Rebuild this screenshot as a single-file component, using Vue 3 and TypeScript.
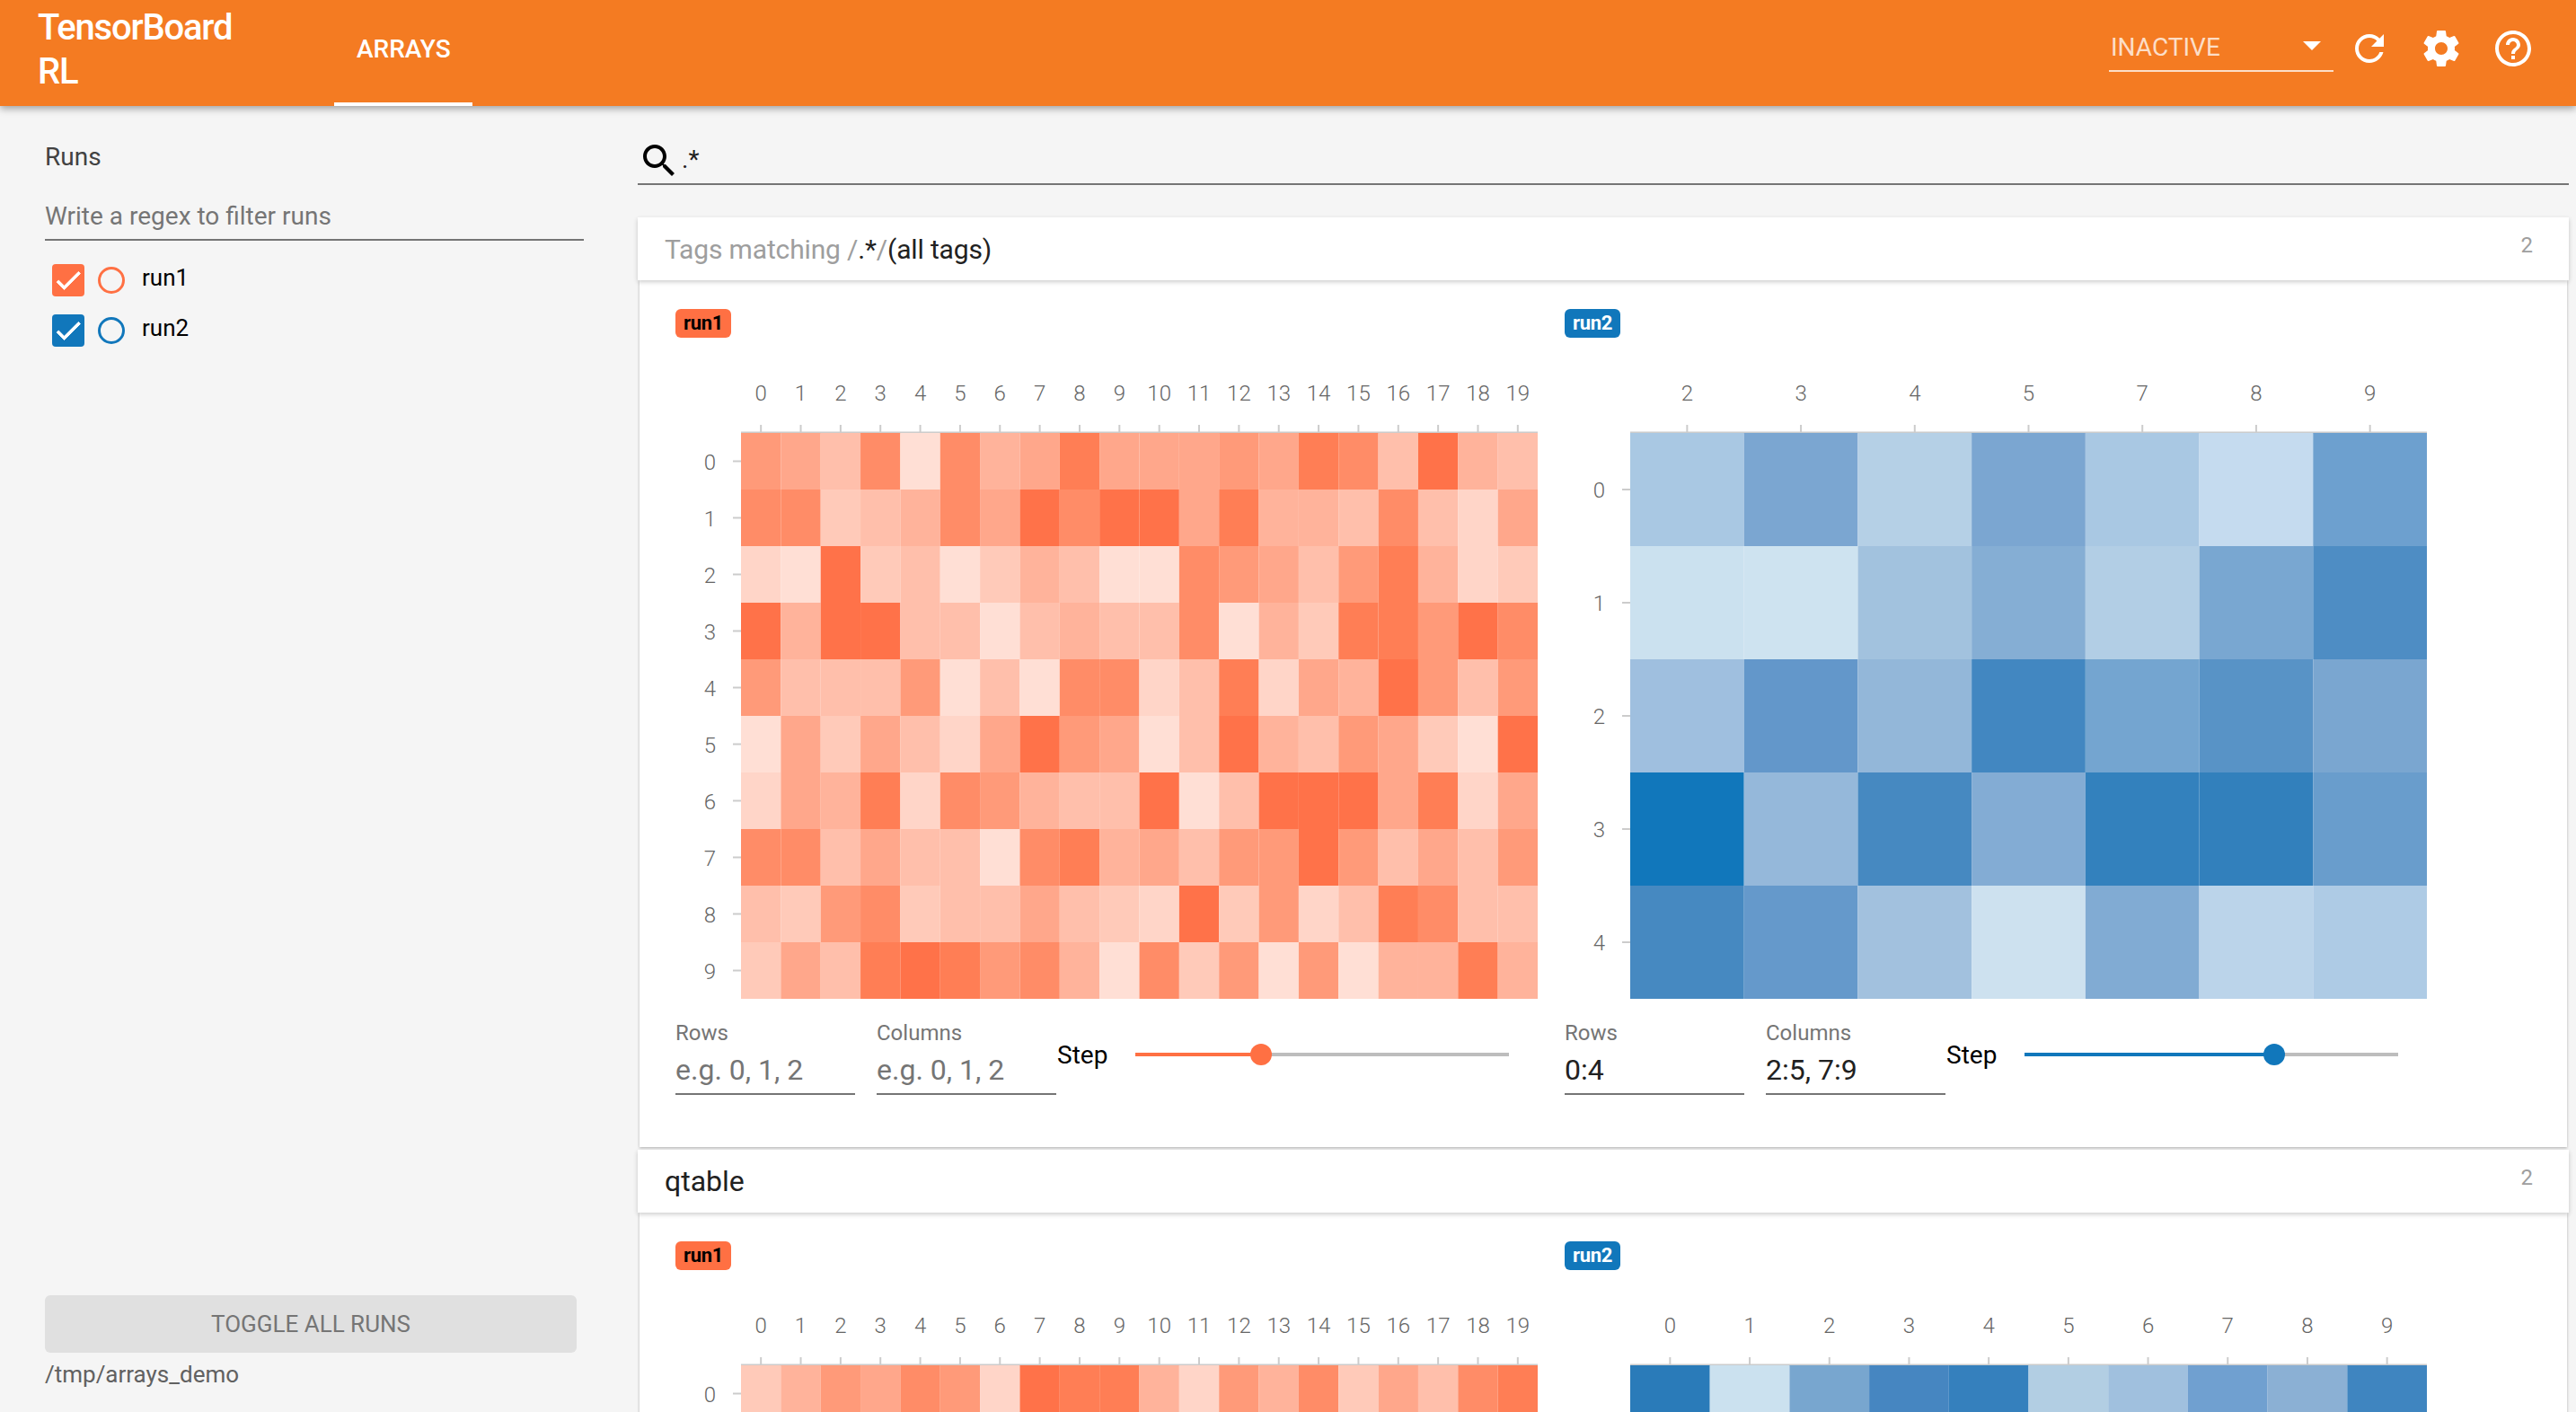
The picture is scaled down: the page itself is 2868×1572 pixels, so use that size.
<script setup lang="ts">
interface Panel {
  run: string;
  color: string;
  badgeText: string;
  cols: string[];
  rowCount: number;
  labelRows: number;
  cells: string[][];
  rows: string;
  columns: string;
  stepAt: number;
  showControls: boolean;
}

interface Section {
  count: number;
  isQuery: boolean;
  title: string;
  panels: Panel[];
}

const ORANGE_SCALE = [
  "#ffdfd5", "#ffd5c8", "#ffcab9", "#ffbfab", "#ffb39b",
  "#ffa78b", "#ff9a79", "#ff8c67", "#ff7e55", "#ff7249"
];

const orange = (rows: string[]) =>
  rows.map((row) => row.split("").map((level) => ORANGE_SCALE[Number(level)]));

const blue = (rows: string[]) =>
  rows.map((row) => row.split(" ").map((hex) => `#${hex}`));

const range = (n: number) => Array.from({ length: n }, (_, i) => String(i));

const sections: Section[] = [
  {
    count: 2,
    isQuery: true,
    title: "",
    panels: [
      {
        run: "run1",
        color: "#ff7043",
        badgeText: "#000",
        cols: range(20),
        rowCount: 10,
        labelRows: 10,
        cells: orange([
          "65370745855565873943",
          "77234759799584437315",
          "10923024300765368412",
          "94993303433704288697",
          "63336030771381549636",
          "05253159650394365209",
          "15481764339039995815",
          "77353307845366963536",
          "32672335321926138733",
          "25389867407260604484"
        ]),
        rows: "",
        columns: "",
        stepAt: 33.65,
        showControls: true
      },
      {
        run: "run2",
        color: "#1177bb",
        badgeText: "#fff",
        cols: ["2", "3", "4", "5", "7", "8", "9"],
        rowCount: 5,
        labelRows: 5,
        cells: blue([
          "a9c8e3 7ba6d1 b5d0e6 7ba6d1 a9c8e3 c5dbef 6da0cf",
          "cbe1ef cee3f0 a2c2de 85aed4 b2cee5 79a7d1 4e8dc4",
          "9fbfdf 6397ca 93b7d9 4287c1 74a5d0 5893c6 7aa6d0",
          "1177bb 95b8da 4689c1 83acd4 3381bd 3280bc 699dcc",
          "4689c1 6599cb a2c1de cde1ef 81abd3 bbd4ea aecbe5"
        ]),
        rows: "0:4",
        columns: "2:5, 7:9",
        stepAt: 66.8,
        showControls: true
      }
    ]
  },
  {
    count: 2,
    isQuery: false,
    title: "qtable",
    panels: [
      {
        run: "run1",
        color: "#ff7043",
        badgeText: "#000",
        cols: range(20),
        rowCount: 10,
        labelRows: 1,
        // only the first row is on screen
        cells: orange(["24657619884164725378"]),
        rows: "",
        columns: "",
        stepAt: 33.65,
        showControls: false
      },
      {
        run: "run2",
        color: "#1177bb",
        badgeText: "#fff",
        cols: range(10),
        rowCount: 5,
        labelRows: 0,
        cells: blue(["2a7bb9 cbe1ef 78a6cf 4686c1 3580bd b2cee3 a0c0de 70a0d0 8bb0d4 3f85c0"]),
        rows: "",
        columns: "",
        stepAt: 66.8,
        showControls: false
      }
    ]
  }
];

const runs = [
  { name: "run1", color: "#ff7043" },
  { name: "run2", color: "#1177bb" }
];

// chart geometry, in px from the top left of the svg
const GRID_X = 73;
const GRID_Y = 82;
const GRID_W = 887;
const GRID_H = 630;
</script>

<template>
  <div class="app">
    <header class="toolbar">
      <div class="brand">TensorBoard RL</div>
      <div class="tab">ARRAYS</div>
      <div class="spacer"></div>
      <div class="inactive">
        <span>INACTIVE</span>
        <i class="caret"></i>
      </div>
      <div class="actions">
        <button class="icon-btn">
          <svg viewBox="0 0 24 24" width="48" height="48"><path d="M17.65 6.35C16.2 4.9 14.21 4 12 4c-4.42 0-7.99 3.58-7.99 8s3.57 8 7.99 8c3.73 0 6.84-2.55 7.73-6h-2.08c-.82 2.33-3.04 4-5.65 4-3.31 0-6-2.69-6-6s2.69-6 6-6c1.66 0 3.14.69 4.22 1.78L13 11h7V4l-2.35 2.35z" /></svg>
        </button>
        <button class="icon-btn">
          <svg viewBox="0 0 24 24" width="48" height="48"><path d="M19.43 12.98c.04-.32.07-.64.07-.98s-.03-.66-.07-.98l2.11-1.65c.19-.15.24-.42.12-.64l-2-3.46c-.12-.22-.39-.3-.61-.22l-2.49 1c-.52-.4-1.08-.73-1.69-.98l-.38-2.65C14.46 2.18 14.25 2 14 2h-4c-.25 0-.46.18-.49.42l-.38 2.65c-.61.25-1.17.59-1.69.98l-2.49-1c-.23-.09-.49 0-.61.22l-2 3.46c-.13.22-.07.49.12.64l2.11 1.65c-.04.32-.07.65-.07.98s.03.66.07.98l-2.11 1.65c-.19.15-.24.42-.12.64l2 3.46c.12.22.39.3.61.22l2.49-1c.52.4 1.08.73 1.69.98l.38 2.65c.03.24.24.42.49.42h4c.25 0 .46-.18.49-.42l.38-2.65c.61-.25 1.17-.59 1.69-.98l2.49 1c.23.09.49 0 .61-.22l2-3.46c.12-.22.07-.49-.12-.64l-2.11-1.65zM12 15.5c-1.93 0-3.5-1.57-3.5-3.5s1.57-3.5 3.5-3.5 3.5 1.57 3.5 3.5-1.57 3.5-3.5 3.5z" /></svg>
        </button>
        <button class="icon-btn">
          <svg viewBox="0 0 24 24" width="48" height="48"><path d="M11 18h2v-2h-2v2zm1-16C6.48 2 2 6.48 2 12s4.48 10 10 10 10-4.48 10-10S17.52 2 12 2zm0 18c-4.41 0-8-3.59-8-8s3.59-8 8-8 8 3.59 8 8-3.59 8-8 8zm0-14c-2.21 0-4 1.79-4 4h2c0-1.1.9-2 2-2s2 .9 2 2c0 2-3 1.75-3 5h2c0-2.25 3-2.5 3-5 0-2.21-1.79-4-4-4z" /></svg>
        </button>
      </div>
    </header>

    <div class="content">
      <aside class="sidebar">
        <div class="runs-title">Runs</div>
        <div class="runs-filter">Write a regex to filter runs</div>
        <div class="run-list">
          <div v-for="r in runs" :key="r.name" class="run-row">
            <span class="checkbox" :style="{ background: r.color }">
              <svg viewBox="0 0 24 24" width="36" height="36"><path d="M9 16.17L4.83 12l-1.41 1.41L9 19 21 7l-1.41-1.41z" fill="#fff" stroke="#fff" stroke-width="0.6" /></svg>
            </span>
            <span class="radio" :style="{ borderColor: r.color }"></span>
            <span class="run-name">{{ r.name }}</span>
          </div>
        </div>
        <div class="toggle-all">TOGGLE ALL RUNS</div>
        <div class="logdir">/tmp/arrays_demo</div>
      </aside>

      <main class="main">
        <div class="search">
          <svg viewBox="0 0 24 24" width="48" height="48"><path d="M15.5 14h-.79l-.28-.27C15.41 12.59 16 11.11 16 9.5 16 5.91 13.09 3 9.5 3S3 5.91 3 9.5 5.91 16 9.5 16c1.61 0 3.09-.59 4.23-1.57l.27.28v.79l5 4.99L20.49 19l-4.99-5zm-6 0C7.01 14 5 11.99 5 9.5S7.01 5 9.5 5 14 7.01 14 9.5 11.99 14 9.5 14z" /></svg>
          <span class="search-text">.*</span>
        </div>

        <section v-for="(s, si) in sections" :key="si" class="category">
          <div class="category-head">
            <div v-if="s.isQuery" class="category-title query">
              <span class="muted">Tags matching /</span>.*<span class="muted">/</span>(all tags)
            </div>
            <div v-else class="category-title">{{ s.title }}</div>
            <div class="category-count">{{ s.count }}</div>
          </div>
          <div class="category-body">
            <div v-for="p in s.panels" :key="p.run" class="panel">
              <div class="badge" :style="{ background: p.color, color: p.badgeText }">{{ p.run }}</div>

              <svg class="chart" width="970" height="713" viewBox="0 0 970 713">
                <g v-for="(c, i) in p.cols" :key="`c${i}`">
                  <text class="axis-text" :x="GRID_X + (i + 0.5) * GRID_W / p.cols.length" y="46" text-anchor="middle">{{ c }}</text>
                  <line class="tick" :x1="GRID_X + (i + 0.5) * GRID_W / p.cols.length" :x2="GRID_X + (i + 0.5) * GRID_W / p.cols.length" y1="73" :y2="GRID_Y" />
                </g>
                <line class="tick" :x1="GRID_X" :x2="GRID_X + GRID_W" :y1="GRID_Y - 0.5" :y2="GRID_Y - 0.5" />
                <g v-for="i in p.labelRows" :key="`r${i}`">
                  <text class="axis-text" x="45" :y="GRID_Y + (i - 0.5) * GRID_H / p.rowCount + 9" text-anchor="end">{{ i - 1 }}</text>
                  <line class="tick" x1="64" :x2="GRID_X" :y1="GRID_Y + (i - 0.5) * GRID_H / p.rowCount" :y2="GRID_Y + (i - 0.5) * GRID_H / p.rowCount" />
                </g>
                <g v-for="(row, ri) in p.cells" :key="`row${ri}`">
                  <rect
                    v-for="(fill, ci) in row"
                    :key="ci"
                    :x="GRID_X + ci * GRID_W / p.cols.length"
                    :y="GRID_Y + ri * GRID_H / p.rowCount"
                    :width="GRID_W / p.cols.length"
                    :height="GRID_H / p.rowCount"
                    :fill="fill"
                  />
                </g>
              </svg>

              <div v-if="p.showControls" class="controls">
                <div class="field">
                  <div class="field-label">Rows</div>
                  <div class="field-input" :class="{ empty: !p.rows }">{{ p.rows || "e.g. 0, 1, 2" }}</div>
                </div>
                <div class="field">
                  <div class="field-label">Columns</div>
                  <div class="field-input" :class="{ empty: !p.columns }">{{ p.columns || "e.g. 0, 1, 2" }}</div>
                </div>
                <div class="step">Step</div>
                <div class="slider">
                  <div class="slider-fill" :style="{ width: `${p.stepAt}%`, background: p.color }"></div>
                  <div class="slider-rest"></div>
                  <div class="slider-thumb" :style="{ left: `${p.stepAt}%`, background: p.color }"></div>
                </div>
              </div>
            </div>
          </div>
        </section>
      </main>
    </div>
  </div>
</template>

<style>
html,
body {
  margin: 0;
  background: #f5f5f5;
}
</style>

<style scoped>
.app {
  height: 100vh;
  overflow: hidden;
  display: flex;
  flex-direction: column;
  font-family: Roboto, "Liberation Sans", sans-serif;
  background: #f5f5f5;
}

/* toolbar */
.toolbar {
  position: relative;
  z-index: 2;
  flex: none;
  height: 118px;
  display: flex;
  align-items: flex-start;
  box-sizing: border-box;
  padding: 0 30px 0 42px;
  background: #f47b22;
  color: #fff;
  box-shadow: 0 3px 8px rgba(0, 0, 0, 0.35);
}

.brand {
  width: 260px;
  margin-right: 70px;
  padding-top: 6px;
  font-size: 40px;
  font-weight: 500;
  letter-spacing: -1.2px;
  line-height: 49px;
}

.tab {
  height: 118px;
  box-sizing: border-box;
  display: flex;
  align-items: center;
  padding: 0 24px 6px 25px;
  border-bottom: 4px solid #fff;
  font-size: 28px;
  font-weight: 500;
}

.spacer {
  flex: 1;
}

.inactive {
  width: 250px;
  height: 80px;
  box-sizing: border-box;
  display: flex;
  align-items: center;
  justify-content: space-between;
  padding: 26px 14px 0 2px;
  border-bottom: 2px solid rgba(255, 255, 255, 0.75);
  font-size: 28px;
  color: rgba(255, 255, 255, 0.75);
}

.caret {
  width: 0;
  height: 0;
  border-left: 10px solid transparent;
  border-right: 10px solid transparent;
  border-top: 10px solid #fff;
  margin-top: -2px;
}

.actions {
  display: flex;
  margin-top: 14px;
}

.icon-btn {
  width: 80px;
  height: 80px;
  padding: 0;
  border: 0;
  background: none;
  display: flex;
  align-items: center;
  justify-content: center;
  fill: #fff;
}

.content {
  flex: 1;
  min-height: 0;
  display: flex;
}

/* sidebar */
.sidebar {
  flex: none;
  width: 710px;
  box-sizing: border-box;
  padding: 41px 68px 26px 50px;
  display: flex;
  flex-direction: column;
}

.runs-title {
  font-size: 28px;
  line-height: 32px;
  color: #424242;
}

.runs-filter {
  width: 600px;
  height: 47px;
  box-sizing: border-box;
  margin-top: 30px;
  border-bottom: 2px solid #757575;
  font-size: 28px;
  line-height: 40px;
  color: #757575;
}

.run-list {
  margin-top: 26px;
  padding-left: 8px;
  display: flex;
  flex-direction: column;
  gap: 20px;
}

.run-row {
  display: flex;
  align-items: center;
  height: 36px;
}

.checkbox {
  width: 36px;
  height: 36px;
  border-radius: 4px;
  display: block;
}

.checkbox svg {
  display: block;
}

.radio {
  width: 30px;
  height: 30px;
  box-sizing: border-box;
  margin-left: 15px;
  border: 3px solid;
  border-radius: 50%;
}

.run-name {
  margin: -6px 0 0 19px;
  font-size: 26px;
  color: #000;
}

.toggle-all {
  margin-top: auto;
  width: 592px;
  height: 64px;
  border-radius: 6px;
  background: #e0e0e0;
  color: #757575;
  font-size: 26px;
  display: flex;
  align-items: center;
  justify-content: center;
}

.logdir {
  margin-top: 8px;
  font-size: 26px;
  line-height: 32px;
  color: #616161;
}

/* main column */
.main {
  flex: 1;
  min-width: 0;
  padding-right: 8px;
}

.search {
  height: 49px;
  margin-top: 37px;
  display: flex;
  align-items: flex-start;
  border-bottom: 2px solid #757575;
  fill: #000;
}

.search-text {
  margin: 6px 0 0 1px;
  font-size: 28px;
  color: #212121;
}

.category {
  margin-top: 3px;
}

.search + .category {
  margin-top: 36px;
}

.category-head {
  position: relative;
  z-index: 1;
  height: 70px;
  box-sizing: border-box;
  padding: 0 40px 0 30px;
  display: flex;
  align-items: center;
  justify-content: space-between;
  background: #fff;
  box-shadow: 0 2px 5px rgba(0, 0, 0, 0.2);
}

.category-title {
  font-size: 32px;
  color: #212121;
}

.category-title.query {
  font-size: 30px;
  letter-spacing: -0.15px;
}

.muted {
  color: #9e9e9e;
}

.category-count {
  margin-top: -8px;
  font-size: 24px;
  color: #9e9e9e;
}

.category-body {
  margin: 0 2px;
  padding: 32px 0 58px 40px;
  display: flex;
  background: #fff;
  box-shadow: 0 1px 3px rgba(0, 0, 0, 0.28);
}

.panel {
  flex: none;
  width: 990px;
}

.badge {
  width: fit-content;
  height: 32px;
  box-sizing: border-box;
  padding: 0 9px;
  border-radius: 6px;
  font-size: 22px;
  font-weight: 700;
  letter-spacing: -0.3px;
  line-height: 32px;
}

.chart {
  display: block;
  margin-top: 24px;
}

.axis-text {
  font-size: 24px;
  font-weight: 300;
  fill: #666;
}

.tick {
  stroke: #ccc;
  stroke-width: 2;
}

/* rows / columns / step */
.controls {
  margin-top: 23px;
  display: flex;
  align-items: flex-start;
}

.field {
  width: 200px;
  margin-right: 24px;
}

.field + .field {
  margin-right: 1px;
}

.field-label {
  font-size: 24px;
  line-height: 28px;
  color: #757575;
}

.field-input {
  height: 50px;
  box-sizing: border-box;
  margin-top: 5px;
  border-bottom: 2px solid #757575;
  font-size: 32px;
  line-height: 44px;
  color: #212121;
}

.field-input.empty {
  color: #757575;
}

.step {
  margin-top: 23px;
  width: 55px;
  font-size: 28px;
  line-height: 32px;
  color: #000;
}

.slider {
  position: relative;
  width: 416px;
  height: 24px;
  margin: 26px 0 0 32px;
  display: flex;
  align-items: center;
}

.slider-fill {
  height: 4px;
}

.slider-rest {
  flex: 1;
  height: 4px;
  background: #bdbdbd;
}

.slider-thumb {
  position: absolute;
  top: 0;
  width: 24px;
  height: 24px;
  margin-left: -12px;
  border-radius: 50%;
}
</style>
